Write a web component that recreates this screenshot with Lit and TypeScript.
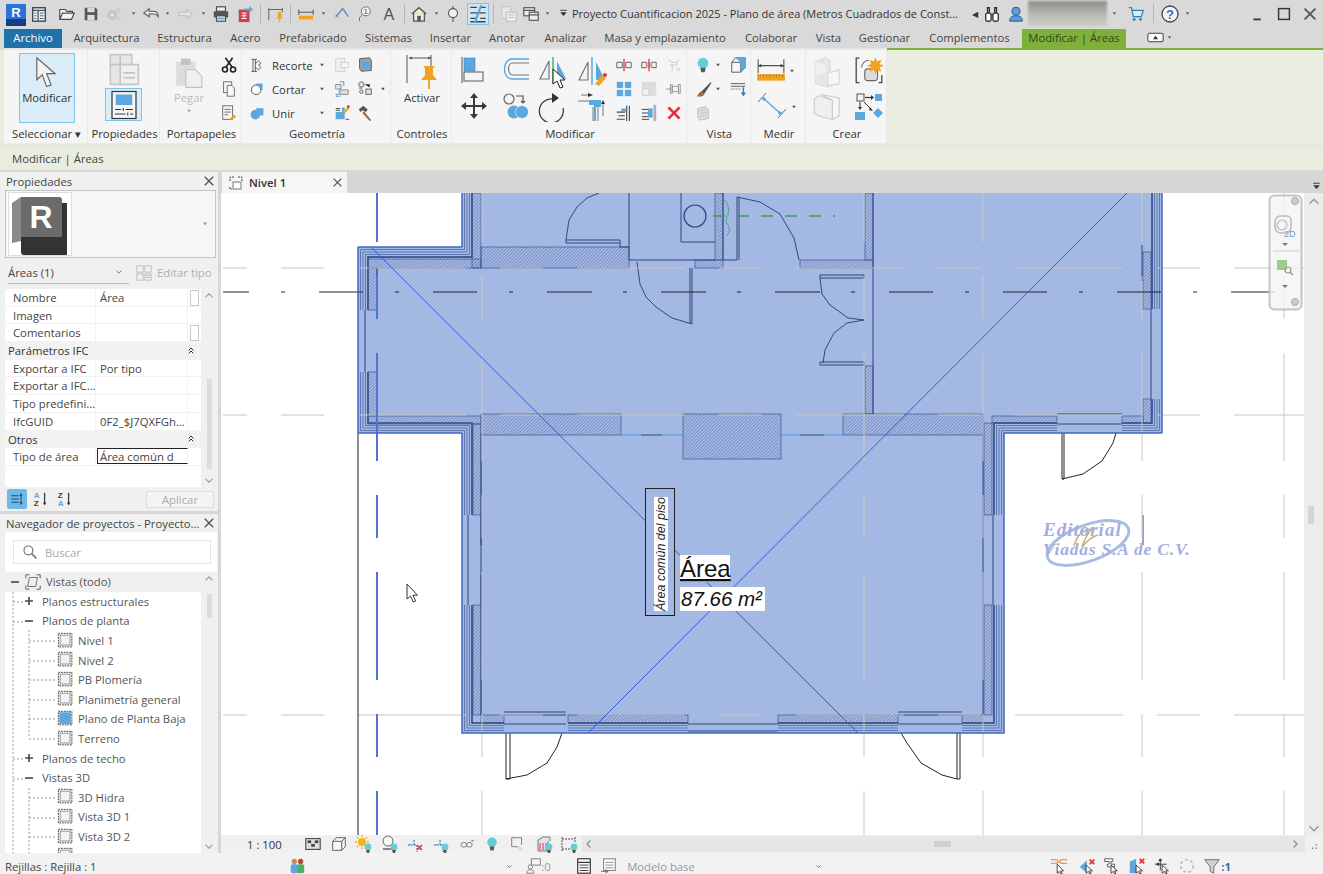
import { LitElement, css, html, svg, TemplateResult } from "lit";
import { customElement } from "lit/decorators.js";

const BLUE = "#5ba7de";
const OR = "#f0a41e";
const RED = "#e8303a";

// 20x20 icons
const I: Record<string, TemplateResult> = {
  docs: svg`<rect x="3" y="3" width="14" height="15" fill="#eef2f5" stroke="#3f4c59" stroke-width="1.6"/><path d="M3 6h14M9 6v12" stroke="#3f4c59" stroke-width="1.4"/><path d="M11 9h4M11 12h4M11 15h4M5 9h2M5 12h2M5 15h2" stroke="#3f4c59"/>`,
  open: svg`<path d="M2 16V5h6l2 2h6v2M2 16l3-7h13l-3 7z" fill="#f4f4f4" stroke="#4a4a4a" stroke-width="1.3"/>`,
  save: svg`<path d="M3 3h12l2 2v12H3z" fill="#565656"/><rect x="6" y="3" width="8" height="5" fill="#dcdcdc"/><rect x="6" y="11" width="8" height="6" fill="#dcdcdc"/>`,
  sync: svg`<circle cx="8" cy="11" r="5.5" fill="#c4c4c4"/><circle cx="8" cy="11" r="2" fill="#e6e6e6"/><circle cx="15" cy="6" r="2.6" fill="#cfcfcf"/><circle cx="15" cy="15" r="2.6" fill="#cfcfcf"/>`,
  undo: svg`<path d="M2 9l6-5v3h5q5 0 5 6 -2-3-5-3H8v3z" fill="#e8e8e8" stroke="#5a5a5a" stroke-width="1.2"/>`,
  redo: svg`<path d="M18 10l-6-5v3H3v4h9v3z" fill="#e4e4e4" stroke="#c0c0c0" stroke-width="1.2"/>`,
  print: svg`<rect x="5" y="2" width="10" height="5" fill="#eee" stroke="#4a4a4a" stroke-width="1.3"/><rect x="2" y="7" width="16" height="7" rx="1" fill="#555"/><rect x="5" y="12" width="10" height="6" fill="#f2f2f2" stroke="#4a4a4a" stroke-width="1.3"/><path d="M6 15h8" stroke="${BLUE}" stroke-width="2"/>`,
  sheet: svg`<rect x="3" y="5" width="12" height="14" fill="#c8414a"/><path d="M6 9h6M6 12h6M6 15h6M9 9v6" stroke="#fff"/><path d="M9 4h6V1l4 4-4 3V6H9z" fill="${BLUE}"/>`,
  pinbar: svg`<path d="M2 3v14M2 5h15M17 3v5" stroke="#666" stroke-width="1.1"/><path d="M11 8h6l-1 1v4l2 2H10l2-2V9z" fill="${OR}"/><path d="M14 15v4" stroke="${OR}" stroke-width="1.4"/>`,
  ruler: svg`<path d="M2 5v6M18 5v6M2 8h16" stroke="#555" stroke-width="1.1"/><rect x="2" y="12" width="16" height="4" fill="${OR}"/>`,
  aligned: svg`<path d="M3 13L11 4M11 4l6 9" stroke="#4f96d0" stroke-width="1.7" fill="none"/><path d="M9 3l4 3M3 11l3 3" stroke="#888"/>`,
  tagn: svg`<circle cx="12" cy="7" r="5" fill="#f2f2f2" stroke="#666"/><text x="12" y="10" font-size="8" text-anchor="middle" fill="#444" font-family="Liberation Sans">1</text><path d="M8 11l-3 3v4" stroke="#666" fill="none"/>`,
  atext: svg`<text x="10" y="17" font-size="18" text-anchor="middle" fill="#555" font-family="Liberation Sans">A</text>`,
  home: svg`<path d="M2 10l8-7 8 7M4 9v9h12V9" fill="#f3ebd9" stroke="#555" stroke-width="1.4"/><rect x="8" y="12" width="4" height="6" fill="#5a5a5a"/>`,
  secm: svg`<circle cx="10" cy="9" r="5" fill="#f0f0f0" stroke="#555" stroke-width="1.2"/><path d="M10 1v3M10 14v5" stroke="#555" stroke-width="1.2"/>`,
  thin: svg`<rect x=".5" y=".5" width="19" height="19" fill="#d3e7f3" stroke="#7fc4e8"/><path d="M3 4h6M12 4h5M3 9h14M3 14h6M12 14h5M3 17h14" stroke="#444" stroke-width="1.3"/><path d="M7 18L13 2" stroke="${BLUE}" stroke-width="2"/>`,
  gdoc: svg`<rect x="2" y="2" width="10" height="13" fill="#e6e6e6" stroke="#c0c0c0"/><rect x="7" y="8" width="11" height="10" fill="#eee" stroke="#bbb"/><path d="M9 11h7M9 14h7" stroke="#bbb"/>`,
  switchw: svg`<rect x="2" y="3" width="12" height="9" fill="#eee" stroke="#555" stroke-width="1.3"/><rect x="8" y="8" width="10" height="9" fill="#eee" stroke="#555" stroke-width="1.3"/><path d="M2 6h12M8 11h10" stroke="#555" stroke-width="1.3"/>`,
  custom: svg`<path d="M5 5h10" stroke="#333" stroke-width="1.4"/><path d="M5 8h10l-5 6z" fill="#333"/>`,
  binoc: svg`<rect x="3" y="9" width="6" height="9" rx="2" fill="#fff" stroke="#333" stroke-width="1.5"/><rect x="11" y="9" width="6" height="9" rx="2" fill="#fff" stroke="#333" stroke-width="1.5"/><path d="M5 9V3h2v6M13 9V3h2v6M9 11h2" stroke="#333" stroke-width="1.5" fill="none"/>`,
  user: svg`<circle cx="10" cy="7" r="4.5" fill="#5f9bd8" stroke="#24548f"/><path d="M3 18c0-5 3-6 7-6s7 1 7 6z" fill="#5f9bd8" stroke="#24548f"/>`,
  cart: svg`<path d="M2 3h3l2 10h9l2-7H6" fill="#d8ecf8" stroke="#2f7fb8" stroke-width="1.4"/><circle cx="8" cy="16" r="1.6" fill="#2f7fb8"/><circle cx="15" cy="16" r="1.6" fill="#2f7fb8"/>`,
  help: svg`<circle cx="10" cy="10" r="8" fill="#f4f4f4" stroke="#444" stroke-width="1.3"/><text x="10" y="15" font-size="13" font-weight="700" text-anchor="middle" fill="#2c6fc0" font-family="Liberation Sans">?</text>`,
  min: svg`<path d="M5 16h8" stroke="#333" stroke-width="2"/>`,
  max: svg`<rect x="4" y="4" width="12" height="12" fill="none" stroke="#333" stroke-width="1.6"/>`,
  close: svg`<path d="M4 4l12 12M16 4L4 16" stroke="#555" stroke-width="2"/>`,
  panelbtn: svg`<rect x="1" y="5" width="18" height="10" rx="2" fill="#fafafa" stroke="#444" stroke-width="1.2"/><path d="M7 12l3-4 3 4z" fill="#333"/>`,
  // ribbon
  arrowbig: svg`<path d="M4 1l0 13 3.2-3 2.6 7 2.6-1-2.6-6.6h5z" fill="#f4f4f4" stroke="#666" stroke-width=".7"/>`,
  props: svg`<rect x="2" y="1" width="13" height="18" fill="#e6e6e6" stroke="#c8c8c8"/><rect x="8" y="7" width="11" height="12" fill="#efefef" stroke="#c4c4c4"/><path d="M2 7h6M8 1v6M10 12h7M10 15h7" stroke="#c4c4c4"/>`,
  propsel: svg`<rect x="2" y="1" width="16" height="18" fill="#f6f6f6" stroke="#333" stroke-width=".8"/><rect x="4.5" y="3" width="11" height="7" fill="${BLUE}"/><path d="M4 13h4M11 13h5M4 16h7M14 16h2M9.5 12v2M12.5 15v2" stroke="#333" stroke-width=".7"/>`,
  paste: svg`<rect x="2" y="3" width="12" height="15" fill="#dcdcdc"/><rect x="5" y="1" width="6" height="4" fill="#c4c4c4"/><path d="M8 8h6l4 4v7H8z" fill="#f0f0f0" stroke="#c0c0c0" stroke-width=".7"/>`,
  scissors: svg`<circle cx="5.5" cy="15" r="2.8" fill="none" stroke="#222" stroke-width="1.8"/><circle cx="14.5" cy="15" r="2.8" fill="none" stroke="#222" stroke-width="1.8"/><path d="M6.5 12.5L14 2M13.5 12.5L6 2" stroke="#222" stroke-width="1.8"/>`,
  copy: svg`<rect x="4" y="2" width="9" height="12" fill="#f8f8f8" stroke="#666"/><path d="M8 6h5l3 3v9H8z" fill="#f8f8f8" stroke="#666"/>`,
  fmt: svg`<rect x="3" y="2" width="11" height="15" fill="#f4f4f4" stroke="#666"/><path d="M5 6h7M5 9h7M5 12h4" stroke="#666"/><path d="M11 16l5-4 2 2-5 4z" fill="${OR}"/>`,
  cope: svg`<path d="M3 3h7M3 18h7M5 3v15M8 3v15M8 8l4-3M8 13l4 3M12 5l3 3-3 2 3 3-3 3" stroke="#444" fill="none" stroke-width="1"/>`,
  cut: svg`<circle cx="9" cy="11" r="6" fill="#fff" stroke="#555" stroke-width="1.2"/><path d="M9 5a6 6 0 0 1 6 6" stroke="${RED}" stroke-width="1.8" fill="none"/><path d="M9 3h8v8h-3a5 5 0 0 0-5-5z" fill="${BLUE}"/>`,
  join: svg`<circle cx="8" cy="12" r="6" fill="${BLUE}"/><rect x="9" y="4" width="9" height="9" fill="${BLUE}"/>`,
  wallg: svg`<rect x="3" y="3" width="10" height="14" fill="#f0f0f0" stroke="#ccc"/><rect x="9" y="7" width="8" height="6" fill="#f6f6f6" stroke="#ccc"/>`,
  cube: svg`<path d="M4 3l11-1 2 3v11l-11 1-2-3z" fill="#9aa5ae" stroke="#555"/><rect x="6" y="6" width="9" height="8" fill="${BLUE}"/>`,
  split: svg`<path d="M3 5h6v5H3zM9 2h3v5" fill="#e6e6e6" stroke="#888"/><path d="M7 11h10v5H7z" fill="#ddd" stroke="#888"/><path d="M3 16h3M3 18h3" stroke="${BLUE}" stroke-width="1.5"/><path d="M8 1v18" stroke="${BLUE}" stroke-dasharray="2 2"/>`,
  grp: svg`<circle cx="6" cy="5" r="3" fill="#ddd" stroke="#666"/><circle cx="6" cy="13" r="2" fill="#ddd" stroke="#666"/><rect x="11" y="10" width="6" height="6" fill="#ddd" stroke="#666"/><path d="M10 5h5v3M3 9h4" stroke="#666"/>`,
  wallb: svg`<path d="M3 17V9h7V4h3v13z" fill="${BLUE}"/><path d="M3 7h5M3 5h5M14 17h4" stroke="#444"/><path d="M11 10l5-7 2 2-5 6z" fill="${OR}"/><circle cx="17" cy="3" r="1.6" fill="${RED}"/>`,
  hammer: svg`<path d="M3 6l5-4 5 4-2 3-4-2-2 2z" fill="#555"/><path d="M9 8l8 10-2 1-8-9z" fill="#a06a48"/>`,
  activate: svg`<path d="M3 1v28M5 4h22M27 1v12" stroke="#555" stroke-width="1"/><path d="M5 4l3-1.6v3.2zM27 4l-3-1.6v3.2z" fill="#555"/><path d="M20 12h12l-2 2v7l4 5H18l4-5v-7z" fill="${OR}" transform="translate(-1 0)"/><path d="M25 26v9" stroke="${OR}" stroke-width="2"/>`,
  align: svg`<path d="M2 1v26" stroke="#888" stroke-width="1.5"/><rect x="4" y="2" width="11" height="13" fill="${BLUE}" stroke="#3f84bd" stroke-width=".6"/><rect x="4" y="16" width="19" height="9" fill="#f5f5f5" stroke="#666" stroke-width="1.1"/>`,
  offset: svg`<path d="M28 3H11C1 3 1 23 11 23h17" fill="none" stroke="${BLUE}" stroke-width="1.4"/><path d="M28 7H12C6 7 6 19 12 19h16" fill="none" stroke="#777" stroke-width="1.2"/>`,
  mirrorp: svg`<path d="M11 5L2 23h9z" fill="#f4f4f4" stroke="#777" stroke-width="1.2"/><path d="M19 5l9 18h-9z" fill="${BLUE}"/><path d="M15 1v27" stroke="#3fc46a" stroke-width="1.6"/>`,
  mirrord: svg`<path d="M11 6L2 24h9z" fill="#f4f4f4" stroke="#777" stroke-width="1.2"/><path d="M19 6l9 18h-9z" fill="${BLUE}"/><path d="M15 1v28" stroke="${BLUE}" stroke-width="1.5"/><path d="M18 28l7-9 4 3-7 8z" fill="${OR}"/><circle cx="28" cy="19" r="2" fill="${RED}"/>`,
  move: svg`<path d="M14 1l4 5h-3v7h7v-3l5 4-5 4v-3h-7v7h3l-4 5-4-5h3v-7H6v3l-5-4 5-4v3h7V6h-3z" fill="#3a3a3a"/>`,
  copym: svg`<circle cx="8" cy="7" r="5" fill="#f5f5f5" stroke="#666" stroke-width="1.2"/><path d="M15 4h7v6m-2-1l2 2 2-2" stroke="#555" fill="none" stroke-width="1.2"/><circle cx="13" cy="20" r="6.5" fill="${BLUE}"/><circle cx="21" cy="20" r="6.5" fill="${BLUE}" stroke="#fff" stroke-width=".6"/>`,
  rotate: svg`<path d="M16 5A12 12 0 1 0 26 14" fill="none" stroke="#3f3f3f" stroke-width="1.3" transform="translate(-1 2)"/><path d="M14 1l7 5-7 5z" fill="#333"/>`,
  trim: svg`<path d="M1 9h12M4 3h10" stroke="#777" stroke-width="1.2"/><path d="M11 1l5 2-5 2z" fill="#333"/><path d="M12 8h12v7h-5v14h-2V13h-5z" fill="${BLUE}"/><path d="M16 15v14M21 15v14M26 12v12" stroke="#777"/><path d="M26 8l-2 4h4z" fill="#333"/>`,
  alignh: svg`<path d="M2 7h6v6H2zM12 7h6v6h-6z" fill="#f5f5f5" stroke="#555"/><path d="M10 3v14" stroke="${RED}" stroke-width="1.4"/>`,
  alignr: svg`<path d="M2 7h5v6H2z" fill="#f5f5f5" stroke="#555"/><path d="M13 7h5v6h-5z" fill="#f5f5f5" stroke="#555"/><rect x="7" y="7" width="6" height="6" fill="#d8b3b3"/><path d="M10 3v14" stroke="${RED}" stroke-width="1.4"/>`,
  pinx: svg`<path d="M4 4l3 3h6l3-3M5 10h8v-3M8 10v7" stroke="#c4c4c4" fill="none"/><path d="M13 13l4 4M17 13l-4 4" stroke="#c4c4c4"/>`,
  pin: svg`<path d="M1 10h5M6 5h2v10H6zM8 7h7v6H8zM15 5h2v10h-2z" stroke="#888" fill="#f4f4f4" stroke-width=".9"/>`,
  grid4: svg`<rect x="2" y="2" width="7" height="7" fill="${BLUE}"/><rect x="11" y="2" width="7" height="7" fill="${BLUE}"/><rect x="2" y="11" width="7" height="7" fill="${BLUE}"/><rect x="11" y="11" width="7" height="7" fill="${BLUE}"/>`,
  gridg: svg`<rect x="2" y="2" width="16" height="16" fill="#dcdcdc"/><rect x="3" y="10" width="7" height="7" fill="#f4f4f4" stroke="#ccc"/>`,
  xred: svg`<path d="M3 3l14 14M17 3L3 17" stroke="${RED}" stroke-width="3.4"/>`,
  tr1: svg`<path d="M2 9h9M4 13h7M2 17h9M13 2v17" stroke="#444" stroke-width="1.2"/><rect x="7" y="5" width="5" height="4" fill="${BLUE}"/><path d="M16 2v17" stroke="#444" stroke-width="1.2"/>`,
  tr2: svg`<path d="M2 6h8M2 10h8M2 14h8M2 17h8" stroke="#444" stroke-width="1.1"/><rect x="9" y="5" width="5" height="10" fill="${BLUE}"/><rect x="15" y="1" width="3" height="18" fill="#b0b0b0"/>`,
  bulb: svg`<circle cx="10" cy="8" r="6" fill="#62cfd8"/><path d="M7 13h6l-1 5H8z" fill="#5a5a5a"/>`,
  box3: svg`<path d="M3 7h10v11H3zM3 7l4-5h11l-5 5M13 18l5-5V2" fill="#f6f6f6" stroke="#555"/><path d="M7 2h11v11l-5 5V7z" fill="${BLUE}"/>`,
  brush: svg`<path d="M19 2L8 13l3 3L19 4z" fill="#555"/><path d="M8 13c-3 0-2 3-5 5 4 1 8 0 8-2z" fill="#a06a38"/>`,
  lines: svg`<path d="M2 4h16M2 7h16" stroke="#555"/><path d="M2 10h11" stroke="#777" stroke-dasharray="2 1"/><path d="M16 8v9" stroke="#2b7fd0" stroke-width="1.6"/><path d="M13 14l3 4 3-4z" fill="#2b7fd0"/>`,
  wallh: svg`<path d="M4 5l9-2 3 3v10l-9 2-3-3z" fill="#ddd" stroke="#bbb"/><path d="M6 8l8-2M6 11l8-2M6 14l8-2" stroke="#c4c4c4"/>`,
  meas: svg`<path d="M2 3v13M26 3v13M2 9h24" stroke="#555"/><path d="M2 9l3-1.5v3zM26 9l-3-1.5v3z" fill="#333"/><rect x="1" y="17" width="26" height="6" fill="${OR}"/><path d="M4 17v2M7 17v3M10 17v2M13 17v3M16 17v2M19 17v3M22 17v2M25 17v3" stroke="#9c6a0c" stroke-width=".7"/>`,
  angle: svg`<path d="M2 11L10 2M22 27L30 18" stroke="#666"/><path d="M7 7l18 16" stroke="${BLUE}" stroke-width="1.3"/><circle cx="8" cy="8" r="1.8" fill="${BLUE}"/><circle cx="24" cy="22" r="1.8" fill="${BLUE}"/>`,
  solidg: svg`<path d="M3 7l9-4 4 3v10l8-2v12l-10 3-11-3z" fill="#e6e6e6" stroke="#ddd"/><path d="M3 7l9 3v6l-9 3z" fill="#f0f0f0"/><path d="M14 17l10-3v12l-10 2z" fill="#f6f6f6" stroke="#d8d8d8"/>`,
  cornerg: svg`<path d="M2 8l4-3 12 4v17l-12-3-4-3z" fill="#efefef" stroke="#ccc"/><path d="M8 4l16 3v16l-6 3V9z" fill="#f6f6f6" stroke="#ccc"/>`,
  inplace: svg`<path d="M6 3H3v23h3M24 26h3v-7" stroke="#444" stroke-width="1.2" fill="none"/><path d="M8 12a7 7 0 0 1 7-7" stroke="#777" fill="none"/><rect x="11" y="13" width="12" height="11" rx="3" fill="#dcdcdc" stroke="#666"/><path d="M21 2l1.6 4 4-1.6-1.6 4 4 1.6-4 1.6 1.6 4-4-1.6-1.6 4-1.6-4-4 1.6 1.6-4-4-1.6 4-1.6-1.6-4 4 1.6z" fill="${OR}"/>`,
  flow: svg`<rect x="3" y="2" width="7" height="7" fill="#f4f4f4" stroke="#555"/><path d="M11 5.5h7" stroke="#333" stroke-width="1.2"/><path d="M17 3l3 2.5-3 2.5z" fill="#333"/><rect x="21" y="2" width="7" height="7" fill="${BLUE}"/><path d="M6 10v7M10 10l8 8" stroke="#333"/><path d="M4 15l2 3 2-3zM16 15l3 4-4-1z" fill="#333"/><rect x="1" y="20" width="10" height="8" fill="${BLUE}"/><path d="M24 16l5 5-5 5-5-5z" fill="${BLUE}"/>`,
  // panel
  editg: svg`<rect x="2" y="2" width="7" height="7" fill="none" stroke="#bbb"/><rect x="11" y="2" width="7" height="7" fill="none" stroke="#bbb"/><rect x="2" y="11" width="7" height="7" fill="none" stroke="#bbb"/><path d="M11 11h7v7h-7zM12 13h5M12 15h5" fill="none" stroke="#bbb"/>`,
  cat: svg`<path d="M3 6h9M3 10h9M3 14h9" stroke="#1e4a6c" stroke-width="1.4"/><path d="M15 3v14" stroke="#1e4a6c" stroke-width="1.3"/><path d="M13 6l2-3 2 3zM13 14l2 3 2-3z" fill="#1e4a6c"/>`,
  az: svg`<text x="2" y="9" font-size="9" font-weight="700" fill="${BLUE}" font-family="Liberation Sans">A</text><text x="2" y="18" font-size="9" font-weight="700" fill="#444" font-family="Liberation Sans">Z</text><path d="M14 3v13" stroke="#333" stroke-width="1.3"/><path d="M12 14l2 3 2-3z" fill="#333"/>`,
  za: svg`<text x="2" y="9" font-size="9" font-weight="700" fill="#444" font-family="Liberation Sans">Z</text><text x="2" y="18" font-size="9" font-weight="700" fill="${BLUE}" font-family="Liberation Sans">A</text><path d="M14 3v13" stroke="#333" stroke-width="1.3"/><path d="M12 14l2 3 2-3z" fill="#333"/>`,
  search: svg`<circle cx="8" cy="8" r="5.5" fill="none" stroke="#777" stroke-width="1.5"/><path d="M12 12l6 6" stroke="#777" stroke-width="2"/>`,
  vistas: svg`<path d="M2 6V2h4M14 2h4v4M2 14v4h4M18 14v4h-4" stroke="#555" fill="none"/><path d="M6 5h9l-2 10H4z" fill="#f0f0f0" stroke="#666"/>`,
  view: svg`<rect x="1.5" y="1.5" width="15" height="15" fill="none" stroke="#333" stroke-dasharray="2 1"/><rect x="3.5" y="3.5" width="11" height="11" fill="#f2f2f2" stroke="#888"/>`,
  viewa: svg`<rect x="1.5" y="1.5" width="15" height="15" fill="none" stroke="#333" stroke-dasharray="2 1"/><rect x="2.5" y="2.5" width="13" height="13" fill="${BLUE}"/>`,
  tabv: svg`<path d="M2 6V2h4M10 2h4v4M2 12v2h2" stroke="#444" fill="none" stroke-dasharray="2 1"/><rect x="5" y="7" width="8" height="7" fill="#fff" stroke="#777"/>`,
  // view bar
  detail: svg`<rect x="2" y="4" width="16" height="12" fill="#ddd" stroke="#444" stroke-width="1.2"/><rect x="4" y="6" width="4" height="3" fill="#444"/><rect x="12" y="6" width="4" height="3" fill="#444"/><rect x="8" y="10" width="4" height="3" fill="#444"/>`,
  style: svg`<path d="M3 7h10v10H3zM3 7l4-4h10l-4 4M13 17l4-4V3" fill="#f8f8f8" stroke="#555"/>`,
  sun: svg`<circle cx="8" cy="8" r="4" fill="#f6b21a"/><path d="M8 1v2M8 13v2M1 8h2M13 8h2M3 3l1.5 1.5M11.5 11.5L13 13M13 3l-1.5 1.5M3 13l1.5-1.5" stroke="#f6b21a" stroke-width="1.4"/>`,
  shad: svg`<circle cx="8" cy="7" r="5" fill="#fafafa" stroke="#666"/><path d="M3 15h10" stroke="#888" stroke-width="2"/>`,
  crop: svg`<path d="M3 11h9v7M9 6v6M5 11v-1" stroke="#2b6fb0" stroke-dasharray="2 1" fill="none"/>`,
  hide: svg`<ellipse cx="6" cy="11" rx="3.5" ry="3" fill="none" stroke="#666"/><ellipse cx="13" cy="11" rx="3.5" ry="3" fill="none" stroke="#666"/><path d="M17 5v2M15 6h4" stroke="#888"/>`,
  dot: svg`<circle cx="5" cy="5" r="3.4" fill="#62cfd8"/><path d="M3 8h4l-1 3H4z" fill="#555"/>`,
  reveal: svg`<path d="M3 3h11v8M3 3v10h7" stroke="#777" fill="none"/><path d="M12 13v3h3" stroke="#888" stroke-dasharray="1 1" fill="none"/>`,
  analy: svg`<path d="M4 6l5-3h7v4M4 6v11h10V7" stroke="#777" fill="#e4e4e4"/><path d="M6 9v7M9 9v7M12 9v7" stroke="${RED}"/>`,
  tempd: svg`<path d="M3 3v14M3 5h13M16 3v6M3 15h9" stroke="#555" stroke-dasharray="2 1"/>`,
  work: svg`<circle cx="7" cy="5" r="3" fill="#d08a52"/><rect x="3" y="8" width="8" height="10" rx="2" fill="${BLUE}"/><circle cx="14" cy="5" r="3" fill="#b04a3a"/><rect x="10" y="8" width="8" height="10" rx="2" fill="#4fae64"/>`,
  worksets: svg`<rect x="7" y="2" width="10" height="7" fill="#f6f6f6" stroke="#777"/><circle cx="6" cy="11" r="2.4" fill="#f6f6f6" stroke="#777"/><path d="M2 18c0-3 2-4 4-4s4 1 4 4z" fill="#f6f6f6" stroke="#777"/>`,
  list: svg`<rect x="3" y="2" width="14" height="16" fill="#fff" stroke="#333" stroke-width="1.3"/><path d="M3 6h14" stroke="#333" stroke-width="1.4"/><path d="M5 9h10M5 12h10M5 15h10" stroke="#333"/>`,
  listg: svg`<rect x="4" y="2" width="13" height="13" fill="#fff" stroke="#888" stroke-width="1.2"/><path d="M6 6h9M6 9h9M6 12h9" stroke="#888"/><path d="M1 16h8M6 14l3 2-3 2" stroke="#666" fill="none"/>`,
  sellink: svg`<path d="M1 7h7M12 7h7M1 3h6a2 2 0 0 1 0 4M19 3h-6a2 2 0 0 0 0 4" stroke="#e57c30" fill="none" stroke-width="1.2"/><path d="M8 8v10l2.5-2 1.5 3.5 1.5-.7-1.5-3.4h3z" fill="#fff" stroke="#222" stroke-width=".9"/>`,
  selun: svg`<path d="M2 11l8-7v14z" fill="${BLUE}"/><path d="M13 3l5 5M18 3l-5 5" stroke="${RED}" stroke-width="2"/><path d="M9 9v9l2.5-2 1.5 3 1.5-.7-1.5-3h3z" fill="#fff" stroke="#222" stroke-width=".9"/>`,
  selpin: svg`<path d="M3 2h9v3h-2v3h4v3H6V8h2V5H3z" fill="#fff" stroke="#555"/><path d="M10 9v9l2.5-2 1.5 3 1.5-.7-1.5-3h3z" fill="#fff" stroke="#222" stroke-width=".9"/>`,
  selface: svg`<path d="M2 5l7-3v16H2z" fill="${BLUE}"/><path d="M13 2l5 5M18 2l-5 5" stroke="${RED}" stroke-width="2"/><path d="M9 9v9l2.5-2 1.5 3 1.5-.7-1.5-3h3z" fill="#fff" stroke="#222" stroke-width=".9"/>`,
  seldrag: svg`<path d="M1 8h13M7 2v13M3 8l2-1.5v3zM7 2l-1.5 2h3z" stroke="#333" fill="#333"/><path d="M9 9v9l2.5-2 1.5 3 1.5-.7-1.5-3h3z" fill="#fff" stroke="#222" stroke-width=".9"/>`,
  ring: svg`<circle cx="10" cy="10" r="7" fill="none" stroke="#bbb" stroke-width="2" stroke-dasharray="3 3"/>`,
  funnel: svg`<path d="M2 3h16l-6 8v7l-4-2v-5z" fill="#d0d0d0" stroke="#666"/>`,
  dd: svg`<path d="M7 8h6l-3 4z" fill="#444"/>`,
  ddg: svg`<path d="M7 8h6l-3 4z" fill="#999"/>`,
  chev: svg`<path d="M6 8l4 4 4-4" fill="none" stroke="#666" stroke-width="1.6"/>`,
  dup: svg`<path d="M6 9l4-4 4 4M6 14l4-4 4 4" fill="none" stroke="#222" stroke-width="1.6"/>`,
  lt: svg`<path d="M12 5l-5 5 5 5" fill="none" stroke="#888" stroke-width="1.6"/>`,
  rt: svg`<path d="M8 5l5 5-5 5" fill="none" stroke="#888" stroke-width="1.6"/>`,
  up: svg`<path d="M5 12l5-5 5 5" fill="none" stroke="#999" stroke-width="1.6"/>`,
  down: svg`<path d="M5 8l5 5 5-5" fill="none" stroke="#999" stroke-width="1.6"/>`,
  grip: svg`<path d="M15 15h2v2h-2zM10 15h2v2h-2zM15 10h2v2h-2z" fill="#888"/>`,
};

const ic = (name: string, size = 18, box = 20) =>
  html`<svg class="ic" width=${size} height=${size} viewBox="0 0 ${box} ${box}">${I[name]}</svg>`;

type StripItem = [TemplateResult | string, number];

// row of zero-width slots, so that each item is centred on its page x value
const strip = (items: StripItem[], from: number, to: number) => {
  let prev = from;
  const slots = items.map(([item, c]) => {
    const gap = c - prev;
    prev = c;
    return html`<span class="slot" style="margin-left:${gap}px">${typeof item === "string" ? ic(item) : item}</span>`;
  });
  return html`${slots}<span class="slot" style="margin-left:${to - prev}px"></span>`;
};

const sep = html`<i class="tsep"></i>`;
const dd = ic("dd", 12);

@customElement("ribbon-bar")
class RibbonBar extends LitElement {
  static styles = css`
    :host { display: flex; flex: none; height: 95px; position: relative; }
    .panels { display: flex; height: 95px; margin-left: 4px; box-sizing: border-box; border-top: 2px solid #e7e7e7; background: #f5f5f5; }
    .p { display: flex; flex-direction: column; border-right: 1px solid #e8e8e8; box-sizing: border-box; }
    .b { height: 75px; flex: none; padding-top: 3px; box-sizing: border-box; }
    .l { height: 18px; line-height: 17px; padding-left: 2px; box-sizing: border-box; text-align: center; font-size: 11.3px; color: #333; white-space: nowrap; }
    .ic { display: block; flex: none; }
    .cell { display: flex; align-items: center; justify-content: center; color: #333; min-width: 0; }
    .w1 { width: 84px; } .w2 { width: 72px; } .w3 { width: 82px; } .w4 { width: 149px; }
    .w5 { width: 61px; } .w6 { width: 235px; } .w7 { width: 64px; } .w8 { width: 55px; } .w9 { width: 81px; }
    .sel { display: flex; flex-direction: column; align-items: center; width: 56px; height: 70px; margin-left: 15px; box-sizing: border-box; background: #d9ecf7; border: 1px solid #7fc4e8; font-size: 11.3px; color: #333; padding-top: 2px; }
    .stack { display: flex; flex-direction: column; align-items: center; gap: 2px; }
    .on { width: 37px; height: 33px; background: #d9ecf7; border: 1px solid #7fc4e8; box-sizing: border-box; display: flex; align-items: center; justify-content: center; }
    .g3 { display: grid; grid-template-columns: 58px 22px; grid-template-rows: repeat(3, 24px); }
    .paste { grid-row: 1 / 4; flex-direction: column; color: #bbb; font-size: 11.3px; justify-content: flex-start; padding-top: 4px; line-height: 14px; }
    .paste span { margin-top: 2px; }
    .g4 { display: grid; grid-template-columns: 89px 22px 24px 12px; grid-template-rows: repeat(3, 24px); }
    .tool { display: flex; align-items: center; padding-left: 7px; font-size: 11.3px; color: #333; }
    .tool b { font-weight: 400; margin-left: 7px; width: 44px; }
    .act { display: flex; flex-direction: column; align-items: center; font-size: 11.3px; color: #333; padding-top: 4px; padding-left: 2px; }
    .g6 { display: flex; }
    .bigs { display: grid; grid-template-columns: 45px 37px 38px 39px; grid-template-rows: 36px 36px; }
    .smalls { display: grid; grid-template-columns: 25px 25px 25px; grid-template-rows: repeat(3, 24px); }
    .g7 { display: grid; grid-template-columns: 38px 26px; grid-template-rows: repeat(3, 24px); }
    .g7 .cell:nth-child(odd) { justify-content: flex-start; padding-left: 7px; }
    .g8 { display: grid; grid-template-rows: 36px 36px; }
    .g8 .cell { justify-content: flex-start; padding-left: 5px; }
    .g9 { display: grid; grid-template-columns: 45px 36px; grid-template-rows: 36px 36px; }
    .ptr { position: absolute; left: 552px; top: 20px; }
  `;

  render() {
    const cell = (n: string, s = 18, b = 20) => html`<div class="cell">${ic(n, s, b)}</div>`;
    const tool = (n: string, t: string) => html`<div class="tool">${ic(n, 16)}<b>${t}</b>${dd}</div>`;
    return html`<div class="panels">
      <div class="p w1">
        <div class="b"><div class="sel">${ic("arrowbig", 34)}<span>Modificar</span></div></div>
        <div class="l">Seleccionar ▾</div>
      </div>
      <div class="p w2">
        <div class="b stack">${ic("props", 33)}<div class="on">${ic("propsel", 30)}</div></div>
        <div class="l">Propiedades</div>
      </div>
      <div class="p w3">
        <div class="b g3">
          <div class="cell paste">${ic("paste", 32)}<span>Pegar</span>${ic("ddg", 12)}</div>
          ${cell("scissors")}
          ${cell("copy")}
          ${cell("fmt")}
        </div>
        <div class="l">Portapapeles</div>
      </div>
      <div class="p w4">
        <div class="b g4">
          ${tool("cope", "Recorte")}${cell("wallg")}${cell("cube")}<div></div>
          ${tool("cut", "Cortar")}${cell("split")}${cell("grp")}<div class="cell">${dd}</div>
          ${tool("join", "Unir")}${cell("wallb")}${cell("hammer")}<div></div>
        </div>
        <div class="l">Geometría</div>
      </div>
      <div class="p w5">
        <div class="b act">${ic("activate", 36, 36)}<span>Activar</span></div>
        <div class="l">Controles</div>
      </div>
      <div class="p w6">
        <div class="b g6">
          <div class="bigs">
            ${cell("align", 30, 30)}${cell("offset", 30, 30)}${cell("mirrorp", 30, 30)}${cell("mirrord", 30, 30)}
            ${cell("move", 30, 30)}${cell("copym", 30, 30)}${cell("rotate", 30, 30)}${cell("trim", 30, 30)}
          </div>
          <div class="smalls">
            ${cell("alignh")}${cell("alignr")}${cell("pinx")}
            ${cell("grid4")}${cell("gridg")}${cell("pin")}
            ${cell("tr1")}${cell("tr2")}${cell("xred", 16)}
          </div>
        </div>
        <div class="l">Modificar</div>
      </div>
      <div class="p w7">
        <div class="b g7">
          <div class="cell">${ic("bulb")}${dd}</div>${cell("box3")}
          <div class="cell">${ic("brush")}${dd}</div>${cell("lines")}
          <div class="cell">${ic("wallh")}</div><div></div>
        </div>
        <div class="l">Vista</div>
      </div>
      <div class="p w8">
        <div class="b g8">
          <div class="cell">${ic("meas", 30, 28)}${dd}</div>
          <div class="cell">${ic("angle", 32, 32)}${dd}</div>
        </div>
        <div class="l">Medir</div>
      </div>
      <div class="p w9">
        <div class="b g9">
          ${cell("solidg", 34, 30)}${cell("inplace", 32, 30)}
          ${cell("cornerg", 34, 30)}${cell("flow", 30, 30)}
        </div>
        <div class="l">Crear</div>
      </div>
    </div>
    <svg class="ptr" width="16" height="22" viewBox="0 0 16 22"><path d="M1 1v15l4-3 3 7 3-1-3-7h5z" fill="#fff" stroke="#222"/></svg>`;
  }
}

@customElement("side-panel")
class SidePanel extends LitElement {
  static styles = css`
    :host { display: flex; flex-direction: column; width: 218px; flex: none; background: #f0f0f0; color: #444; font-size: 11.3px; }
    .ic { display: block; flex: none; }
    .hd { display: flex; align-items: center; justify-content: space-between; height: 18px; padding: 0 2px 0 6px; flex: none; white-space: nowrap; }
    .type { height: 66px; margin: 0 2px 0 5px; border: 1px solid #c4c4c4; background: #f6f6f6; display: flex; align-items: center; justify-content: space-between; padding-right: 3px; flex: none; }
    .logo { width: 64px; height: 64px; margin-left: 2px; background: #fff; border: 1px solid #ddd; box-sizing: border-box; }
    .inst { display: flex; align-items: center; height: 29px; padding-left: 8px; flex: none; }
    .cur { display: flex; align-items: center; justify-content: space-between; width: 121px; height: 23px; border-bottom: 1px solid #bbb; padding-right: 4px; box-sizing: border-box; margin-right: 6px; color: #444; }
    .editg { display: flex; align-items: center; gap: 4px; color: #b0b0b0; }
    .tbl { display: flex; height: 198px; margin: 2px 0 0 5px; flex: none; }
    .rows { width: 196px; background: #fff; }
    .row { display: grid; grid-template-columns: 91px 92px 12px; height: 17.7px; line-height: 17px; box-sizing: border-box; border-bottom: 1px solid #f2f2f2; white-space: nowrap; overflow: hidden; }
    .row > span:first-child { padding-left: 8px; border-right: 1px solid #f2f2f2; }
    .row > span:nth-child(2) { padding-left: 4px; border-right: 1px solid #f2f2f2; }
    .group { display: flex; justify-content: space-between; align-items: center; background: #f2f2f2; padding: 0 4px 0 3px; height: 17.7px; color: #333; box-sizing: border-box; }
    .chk { display: block; width: 7px; height: 14px; margin: 1px 0 0 2px; border: 1px solid #c8c8c8; background: #fff; }
    .edit { border: 1px solid #222; margin: 0 0 0 1px; height: 16px; line-height: 15px; padding-left: 2px !important; box-sizing: border-box; overflow: hidden; }
    .sb { width: 16px; display: flex; flex-direction: column; align-items: center; background: #f0f0f0; position: relative; }
    .thumb { position: absolute; width: 5px; background: #dcdcdc; left: 6px; }
    .t1 { top: 90px; height: 90px; }
    .t2 { top: 22px; height: 24px; }
    .sb .ic:last-child { margin-top: auto; }
    .tools { display: flex; align-items: center; height: 24px; padding-left: 7px; flex: none; }
    .tb { width: 20px; height: 20px; display: flex; align-items: center; justify-content: center; margin-right: 4px; border-radius: 2px; }
    .tb.on { background: #6db9e8; }
    .apply { margin-left: auto; margin-right: 4px; width: 68px; height: 17px; line-height: 15px; text-align: center; border: 1px solid #ddd; border-radius: 2px; color: #aaa; background: #f4f4f4; box-sizing: border-box; }
    .gap { height: 3px; background: #d6d6d6; flex: none; }
    .searchw { background: #fff; margin-left: 5px; margin-right: 1px; height: 40px; padding: 8px 6px 0 8px; box-sizing: border-box; flex: none; }
    .search { display: flex; align-items: center; gap: 7px; height: 24px; border: 1px solid #e4e4e4; padding-left: 8px; color: #aaa; box-sizing: border-box; }
    .tree { display: flex; margin-left: 5px; height: 281px; flex: none; overflow: hidden; }
    .nodes { width: 196px; background: #fff; position: relative; }
    .node { display: flex; align-items: center; height: 19.6px; white-space: nowrap; color: #555; }
    .node.root { background: #f0f0f0; padding-left: 5px; gap: 4px; }
    .node.lv1 { padding-left: 19px; gap: 8px; }
    .node.lv2 { padding-left: 52px; gap: 3px; }
    .sign { width: 10px; height: 10px; }
    .conn { position: absolute; left: 0; top: 0; pointer-events: none; }
  `;

  render() {
    const props = [
      ["Nombre", "Área", true],
      ["Imagen", "", false],
      ["Comentarios", "", true],
      { g: "Parámetros IFC" },
      ["Exportar a IFC", "Por tipo", false],
      ["Exportar a IFC...", "", false],
      ["Tipo predefini...", "", false],
      ["IfcGUID", "0F2_$J7QXFGh...", false],
      { g: "Otros" },
    ] as any[];
    const tree: [number, string, string?][] = [
      [1, "Planos estructurales", "+"],
      [1, "Planos de planta", "-"],
      [2, "Nivel 1"],
      [2, "Nivel 2"],
      [2, "PB Plomería"],
      [2, "Planimetría general"],
      [2, "Plano de Planta Baja", "a"],
      [2, "Terreno"],
      [1, "Planos de techo", "+"],
      [1, "Vistas 3D", "-"],
      [2, "3D Hidra"],
      [2, "Vista 3D 1"],
      [2, "Vista 3D 2"],
      [2, ""],
    ];
    return html`
      <div class="hd"><span>Propiedades</span>${ic("close", 14)}</div>
      <div class="type">
        <div class="logo">
          <svg width="62" height="62" viewBox="0 0 62 62" class="ic">
            <path d="M53 10h5v52H53z" fill="#333"/>
            <path d="M12 44h46v18H15q-3 0-3-3z" fill="#333"/>
            <path d="M3 10l9-6v44l-9 2z" fill="#8a8a8a"/>
            <path d="M12 4h38q3 0 3 3v37H12z" fill="#6b6b6b"/>
            <text x="32" y="35" font-size="32" font-weight="700" fill="#fff" text-anchor="middle" font-family="Liberation Sans">R</text>
          </svg>
        </div>
        ${ic("ddg", 14)}
      </div>
      <div class="inst">
        <div class="cur"><span>Áreas (1)</span>${ic("chev", 12)}</div>
        <div class="editg">${ic("editg", 18)}<span>Editar tipo</span></div>
      </div>
      <div class="tbl">
        <div class="rows">
          ${props.map((p) =>
            p.g
              ? html`<div class="group"><span>${p.g}</span>${ic("dup", 12)}</div>`
              : html`<div class="row"><span>${p[0]}</span><span>${p[1]}</span><span>${p[2] ? html`<i class="chk"></i>` : ""}</span></div>`
          )}
          <div class="row"><span>Tipo de área</span><span class="edit">Área común d</span><span></span></div>
        </div>
        <div class="sb">${ic("up", 14)}<i class="thumb t1"></i>${ic("down", 14)}</div>
      </div>
      <div class="tools">
        <div class="tb on">${ic("cat", 16)}</div>
        <div class="tb">${ic("az", 18)}</div>
        <div class="tb">${ic("za", 18)}</div>
        <div class="apply">Aplicar</div>
      </div>
      <div class="gap"></div>
      <div class="hd"><span>Navegador de proyectos - Proyecto...</span>${ic("close", 14)}</div>
      <div class="searchw"><div class="search">${ic("search", 16)}<span>Buscar</span></div></div>
      <div class="tree">
        <div class="nodes">
          <div class="node root"><svg class="sign" viewBox="0 0 10 10"><path d="M1 5h8" stroke="#444" stroke-width="1.6"/></svg>${ic("vistas", 18)}<span>Vistas (todo)</span></div>
          ${tree.map(([lv, t, m]) =>
            lv === 1
              ? html`<div class="node lv1"><svg class="sign" viewBox="0 0 10 10"><path d=${m === "+" ? "M1 5h8M5 1v8" : "M1 5h8"} stroke="#444" stroke-width="1.6"/></svg><span>${t}</span></div>`
              : html`<div class="node lv2">${ic(m === "a" ? "viewa" : "view", 18)}<span>${t}</span></div>`
          )}
          <svg class="conn" width="60" height="282" viewBox="0 0 60 282" fill="none" stroke="#999" stroke-dasharray="2 2">
            <path d="M8 20v262M8 30h10M8 50h10M8 187h10M8 207h10"/>
            <path d="M24 58v108M24 69h26M24 89h26M24 108h26M24 128h26M24 147h26M24 167h26"/>
            <path d="M24 216v66M24 226h26M24 246h26M24 265h26"/>
          </svg>
        </div>
        <div class="sb">${ic("up", 14)}<i class="thumb t2"></i>${ic("down", 14)}</div>
      </div>
    `;
  }
}

// hatched wall pieces: x y w h
const HATCH = [
  [472, 193, 9, 75], [368, 259, 113, 9], [368, 268, 9, 42], [368, 372, 9, 44], [368, 416, 113, 8],
  [473, 424, 8, 91], [473, 605, 8, 110], [481, 247, 148, 21], [715, 193, 8, 67], [695, 260, 28, 8],
  [800, 260, 73, 8], [865, 193, 8, 67], [865, 366, 8, 48], [481, 414, 140, 21], [683, 414, 98, 45],
  [843, 414, 140, 21], [984, 423, 8, 92], [984, 605, 8, 110], [992, 416, 65, 7], [1122, 416, 21, 7],
  [1143, 399, 8, 24], [1143, 252, 8, 57], [481, 715, 23, 8], [568, 715, 120, 8], [778, 715, 120, 8], [962, 715, 21, 8],
];
// pieces of the outline that doors and windows cut away
const OPENINGS = [
  [359.5, 310, 17, 62], [463.5, 515, 17, 90], [985, 515, 17.5, 90], [1143, 309, 17.5, 90],
  [504, 714, 64, 18], [688, 714, 90, 18], [898, 714, 64, 18], [1057, 413, 65, 18],
];
const DARKL = [
  "M365 310v62M377 268v42M377 372v44", "M468 515v90M481 515v30M481 575v30", "M993 515v90M1143 545v-30",
  "M1151 309v90M1142 245v36",
  "M504 715h62M504 724h62M504 712h62M898 715h64M898 724h64M898 712h64M688 724h90M688 731h90",
  "M1057 414h65M1057 424h65",
  "M629 193v67h86M681 193v49h34M723 193v67h14M737 197v63M739 197v63",
  "M873 193v221M692 268v56M690 268v56",
  "M566 240h54v3h-54zM620 243v4h9",
  "M820 275h44v3h-44zM820 362h44v3h-44z",
  "M481 434v281M983 435v280",
];
const ARCS = [
  "M566 240l3-20 8-13 10-9 12-5",
  "M737 197l23 5 20 12 14 24 5 22",
  "M637 262l3 22 6 13 10 10 16 11 20 6",
  "M820 278l2 16 8 11 18 13 16 2-17 3-13 10-9 17-2 13",
];
const OUT = ["M506 733v46h4v-46M506 779l21-4 20-12 10-16 5-14", "M957 733v46h3v-46M957 779l-15-4-21-12-14-20-6-10", "M1062 433v46h2v-46M1062 479l21-5 19-13 11-18 3-10"];
const VGRID = [482, 864, 983, 1142, 1284];
const HGRID = [268, 415, 715];

const outline = (d: number) =>
  `M${462 + d} 193V${247 + d}H${358 + d}V${433 - d}H${462 + d}V${733 - d}H${1004 - d}V${433 - d}H${1162 - d}V193`;

@customElement("plan-canvas")
class PlanCanvas extends LitElement {
  static styles = css`
    :host { display: block; width: 1083px; height: 642px; background: #fff; overflow: hidden; flex: none; }
    svg { display: block; }
  `;

  render() {
    return html`<svg width="1083" height="642" viewBox="221 193 1083 642">
      <defs>
        <pattern id="h" width="3.4" height="3.4" patternUnits="userSpaceOnUse">
          <path d="M-1 1L1-1M0 3.4L3.4 0M2.4 4.4L4.4 2.4" stroke="#5d70a8" stroke-width=".7"/>
        </pattern>
      </defs>
      <path d="M462 193V247H358V433H462V733H1004V433H1162V193z" fill="#a3b8e3"/>
      ${[2.5, 5, 7.5].map((d) => svg`<path d=${outline(d)} fill="none" stroke="#5570ad" stroke-width=".9"/>`)}
      <path d=${outline(10)} fill="none" stroke="#2a437c" stroke-width="1.5"/>
      ${OPENINGS.map(([x, y, w, h]) => svg`<rect x=${x} y=${y} width=${w} height=${h} fill="#a3b8e3"/>`)}
      ${HATCH.map(([x, y, w, h]) => svg`<rect x=${x} y=${y} width=${w} height=${h} fill="url(#h)" stroke="#3d5590" stroke-width=".7"/>`)}
      ${DARKL.map((d) => svg`<path d=${d} fill="none" stroke="#2f4780" stroke-width="1"/>`)}
      ${ARCS.map((d) => svg`<path d=${d} fill="none" stroke="#33497e" stroke-width="1"/>`)}
      ${OUT.map((d) => svg`<path d=${d} fill="none" stroke="#222" stroke-width="1"/>`)}
      <circle cx="695" cy="216" r="11" fill="none" stroke="#2f4780" stroke-width="1.2"/>
      <path d="M713 216H835" stroke="#3f9c5a" stroke-width="1.3" stroke-dasharray="12 12"/>
      <path d="M724 200q6 4 4 15q-4 6 0 10q4 6-2 11" fill="none" stroke="#3f9c7a" stroke-width=".8"/>
      <path d="M621 435h20M662 435h21M781 435h19M824 435h19" stroke="#38a4dc" stroke-width="1"/>
      <path d="M641 435h21M800 435h24" stroke="#2f4780" stroke-width="1"/>
      <!-- reference grid -->
      ${HGRID.map((y) => svg`<path d="M223 ${y}H1304" stroke="#c8c6bc" stroke-width="1" stroke-dasharray="108 34 43 34" stroke-dashoffset="84"/>`)}
      ${VGRID.map((x) => svg`<path d="M${x} 193V835" stroke="#c8c8c8" stroke-width="1" stroke-dasharray="108 34 43 34" stroke-dashoffset="59"/>`)}
      <path d="M358 433V835" stroke="#222" stroke-width="1"/>
      <path d="M377 193V835" stroke="#4f74d4" stroke-width="2" stroke-dasharray="108 34 43 34" stroke-dashoffset="59"/>
      <path d="M223 292H249M281 292h4M319 292h44M395 292h4M433 292h44M509 292h4M547 292h45M623 292h4M661 292h45M737 292h4M775 292h45M851 292h4M889 292h44M965 292h4M1003 292h44M1079 292h4M1117 292h44M1193 292h4M1231 292h44" stroke="#222" stroke-width="1"/>
      <path d="M372 248L858 733M1127 193L588 733" stroke="#3060d4" stroke-width="1"/>
      <path d="M358 247H462M358 433H462M462 433V733H1004V433H1162M1162 193V433M358 247V433M462 193V247" fill="none" stroke="#3f66c8" stroke-width="1.5"/>
      <!-- area tag -->
      <rect x="645.5" y="488.5" width="29" height="127" fill="#a3b8e3" stroke="#222" stroke-width="1"/>
      <rect x="654" y="497" width="14" height="114" fill="#fff"/>
      <text transform="translate(665 611) rotate(-90)" font-family="Liberation Sans" font-style="italic" font-size="12.5" fill="#222">Área común del piso</text>
      <rect x="680" y="555" width="50" height="27" fill="#fff"/>
      <text x="680" y="577" font-family="Liberation Sans" font-size="24" fill="#111" text-decoration="underline">Área</text>
      <rect x="680" y="587" width="85" height="24" fill="#fff"/>
      <text x="681" y="606" font-family="Liberation Sans" font-style="italic" font-size="20.5" fill="#111">87.66 m²</text>
      <!-- watermark -->
      <ellipse cx="1088" cy="543" rx="43" ry="18" transform="rotate(-20 1088 543)" fill="none" stroke="#a9bde0" stroke-width="3"/>
      <path d="M1074 546q4-16 18-17q-6 6-10 18q8-10 16-12" fill="none" stroke="#c9a878" stroke-width="1.4"/>
      <text x="1043" y="536" font-family="Liberation Serif" font-weight="700" font-style="italic" font-size="19" letter-spacing="1" fill="#a4aee0">Editorial</text>
      <text x="1043" y="555" font-family="Liberation Serif" font-weight="700" font-style="italic" font-size="17.5" fill="#a4aee0" letter-spacing=".8">Viadas S.A de C.V.</text>
      <!-- nav bar -->
      <rect x="1269.5" y="195.5" width="32" height="114" rx="5" fill="#f4f4f4" fill-opacity=".8" stroke="#c4c4c4" stroke-width="2"/>
      <circle cx="1295" cy="201" r="3.5" fill="#ccc" stroke="#aaa"/>
      <circle cx="1295" cy="302" r="3.5" fill="#ccc" stroke="#aaa"/>
      <path d="M1280 216h7a4 4 0 0 1 4 4v7a6 6 0 0 1-6 6h-4a6 6 0 0 1-6-6v-5a6 6 0 0 1 5-6z" fill="none" stroke="#bbb" stroke-width="1.5"/>
      <circle cx="1282" cy="225" r="5" fill="none" stroke="#bbb" stroke-width="1.2"/>
      <text x="1284" y="237" font-family="Liberation Sans" font-size="9" fill="#6f9fd0">2D</text>
      <path d="M1282 243h6l-3 3z" fill="#777"/>
      <path d="M1273 251h26" stroke="#ccc"/>
      <rect x="1277" y="260" width="10" height="10" fill="#9ccb8c"/>
      <circle cx="1288" cy="270" r="3" fill="none" stroke="#999" stroke-width="1.2"/>
      <path d="M1290 272l3 3" stroke="#999" stroke-width="1.5"/>
      <path d="M1282 285h6l-3 3z" fill="#777"/>
      <!-- pointer -->
      <path d="M407 584v15l3.6-3 2.6 6 2.4-1-2.6-5.8h4.4z" fill="#fff" stroke="#333"/>
    </svg>`;
  }
}

@customElement("app-root")
export class AppRoot extends LitElement {
  static styles = css`
    :host { display: block; width: 1323px; height: 874px; overflow: hidden; font-family: "Open Sans", "Noto Sans", sans-serif; font-size: 11.3px; color: #333; background: #d9d9d9; }
    .ic { display: block; flex: none; }
    .slot { display: flex; align-items: center; justify-content: center; flex: none; width: 0; height: 100%; white-space: nowrap; }
    .title { display: flex; align-items: center; height: 27px; }
    .tsep { display: block; flex: none; width: 1px; height: 19px; background: #b4b4b4; }
    .logoR { flex: none; width: 20px; height: 22px; margin-top: 2px; background: linear-gradient(#2a71d8 0 70%, #123f86 70%); color: #fff; font: 700 13px "Liberation Sans", sans-serif; text-align: center; line-height: 17px; }
    .ttl { width: 394px; flex: none; font-size: 11px; white-space: nowrap; overflow: hidden; margin-left: 5px; color: #333; }
    .blur { flex: none; width: 79px; height: 25px; background: linear-gradient(#8d9088, #bcbfb6 60%, #c9ccc2); filter: blur(1px); }
    .tarrow { font-size: 8px; }
    .tabs { display: flex; align-items: stretch; height: 21px; }
    .arch { width: 58px; margin: 2px 0 0 4px; height: 19px; line-height: 18px; text-align: center; background: #1f72a8; color: #fff; flex: none; }
    .tabtx { color: #444; line-height: 21px; }
    .ctx { width: 104px; margin-top: 2px; height: 19px; line-height: 18px; text-align: center; background: #7fb03c; color: #2f4a12; flex: none; white-space: nowrap; }
    .rib { height: 2px; background: linear-gradient(90deg, transparent 887px, #7fb03c 887px); position: relative; }
    .ribbonw { background: linear-gradient(#d9d9d9 0 2px, #e9eddf 2px); height: 97px; margin-top: -2px; }
    .ctxbar { height: 25px; line-height: 26px; background: #e9eddf; padding-left: 12px; border-top: 1px solid #dfe3d4; box-sizing: border-box; color: #444; }
    .main { display: flex; height: 681px; margin-top: 2px; }
    .gapv { width: 3px; background: #d6d6d6; flex: none; }
    .views { flex: 1; display: flex; flex-direction: column; min-width: 0; background: #f0f0f0; }
    .vtabs { display: flex; align-items: flex-end; justify-content: space-between; height: 21px; background: #d6d6d6; flex: none; }
    .vtab { display: flex; align-items: center; width: 125px; height: 21px; margin-left: 1px; background: #f6f6f6; padding-left: 6px; box-sizing: border-box; gap: 5px; }
    .vtab b { font-weight: 600; flex: 1; color: #333; }
    .vtab .ic:last-child { margin-right: 3px; }
    .vmid { display: flex; flex: none; height: 642px; }
    .vsb { width: 19px; background: #ececec; display: flex; flex-direction: column; align-items: center; position: relative; flex: none; }
    .vsb .ic:last-child { margin-top: auto; margin-bottom: -2px; }
    .vthumb { position: absolute; left: 4px; top: 313px; width: 6px; height: 18px; background: #d4d4d4; }
    .vbar { display: flex; height: 18px; align-items: center; background: #f0f0f0; flex: none; }
    .scale { width: 80px; padding-left: 26px; box-sizing: border-box; flex: none; color: #333; white-space: nowrap; }
    .hsb { display: flex; align-items: center; height: 16px; background: #e6e6e6; width: 723px; flex: none; position: relative; }
    .hthumb { position: absolute; left: 352px; top: 5px; width: 17px; height: 6px; background: #d0d0d0; }
    .hsb .ic:last-child { margin-left: auto; margin-right: 3px; }
    .status { display: flex; align-items: center; height: 21px; padding-top: 5px; box-sizing: border-box; background: #f2f2f2; white-space: nowrap; color: #444; }
    .stext { width: 200px; padding-left: 5px; box-sizing: border-box; flex: none; }
    .muted { color: #999; }
    .one { color: #3a6ea5; font-weight: 700; }
  `;

  render() {
    const withDot = (body: TemplateResult, dx = 9) =>
      html`<svg class="ic" width="20" height="20" viewBox="0 0 20 20">${body}<g transform="translate(${dx} 8)">${I.dot}</g></svg>`;
    const leftTools: StripItem[] = [
      [html`<div class="logoR">R</div>`, 16], ["docs", 39], ["open", 67], ["save", 91], ["sync", 114], [ic("dd", 11), 133],
      ["undo", 151], [ic("dd", 11), 167], ["redo", 185], [ic("dd", 11), 203], ["print", 221], ["sheet", 245], [sep, 260],
      ["pinbar", 276], [sep, 290], ["ruler", 306], [ic("dd", 11), 323], ["aligned", 342], ["tagn", 364], ["atext", 389], [sep, 404],
      ["home", 419], [ic("dd", 11), 436], ["secm", 453], [ic("thin", 22), 478], [sep, 493], ["gdoc", 509], ["switchw", 531], [ic("dd", 11), 547], [ic("custom", 13), 563],
    ];
    const rightTools: StripItem[] = [
      [html`<span class="tarrow">◀</span>`, 975], ["binoc", 992], ["user", 1016], [html`<div class="blur"></div>`, 1067], [ic("dd", 11), 1114],
      ["cart", 1136], [sep, 1153], [ic("help", 20), 1170], [ic("dd", 11), 1187], ["min", 1258], ["max", 1284], ["close", 1310],
    ];
    const tabs: [string, number][] = [
      ["Arquitectura", 106.5], ["Estructura", 184.5], ["Acero", 245.5], ["Prefabricado", 313], ["Sistemas", 388.5],
      ["Insertar", 450.5], ["Anotar", 507], ["Analizar", 565.5], ["Masa y emplazamiento", 665], ["Colaborar", 771],
      ["Vista", 828.5], ["Gestionar", 884.5], ["Complementos", 969.5],
    ];
    const viewBar: StripItem[] = [
      ["detail", 313], ["style", 339], [withDot(I.sun), 364], [withDot(I.shad), 390],
      [html`<svg class="ic" width="20" height="20" viewBox="0 0 20 20">${I.crop}<path d="M12 11l5 5M17 11l-5 5" stroke="#e8303a" stroke-width="1.6"/></svg>`, 415],
      [withDot(I.crop), 441], [ic("hide", 16), 467], [ic("bulb", 16), 492], ["reveal", 518], [withDot(I.analy, 10), 544], [withDot(I.tempd, 10), 569],
    ];
    const stat: StripItem[] = [
      ["work", 297], [ic("chev", 11), 509], ["worksets", 534], [html`<span class="muted">:0</span>`, 546], ["list", 584], ["listg", 609],
      [html`<span class="muted">Modelo base</span>`, 661], [ic("chev", 11), 818],
      ["sellink", 1059], ["selun", 1087], ["selpin", 1111], ["selface", 1137], ["seldrag", 1163], ["ring", 1187], ["funnel", 1212],
      [html`<span class="one">:1</span>`, 1226],
    ];
    return html`
      <div class="title">
        ${strip(leftTools, 0, 567)}
        <div class="ttl">Proyecto Cuantificacion 2025 - Plano de área (Metros Cuadrados de Const...</div>
        ${strip(rightTools, 966, 1323)}
      </div>
      <div class="tabs">
        <div class="arch">Archivo</div>
        ${strip(tabs.map(([t, c]) => [html`<span class="tabtx">${t}</span>`, c] as StripItem), 62, 1022)}
        <div class="ctx">Modificar | Áreas</div>
        ${strip([[ic("panelbtn", 17), 1155], [ic("dd", 11), 1169]], 1126, 1180)}
      </div>
      <div class="rib"></div>
      <div class="ribbonw"><ribbon-bar></ribbon-bar></div>
      <div class="ctxbar">Modificar | Áreas</div>
      <div class="main">
        <side-panel></side-panel>
        <div class="gapv"></div>
        <div class="views">
          <div class="vtabs">
            <div class="vtab">${ic("tabv", 16, 16)}<b>Nivel 1</b>${ic("close", 13)}</div>
            ${ic("custom", 13)}
          </div>
          <div class="vmid">
            <plan-canvas></plan-canvas>
            <div class="vsb">${ic("up", 18)}<i class="vthumb"></i>${ic("down", 18)}</div>
          </div>
          <div class="vbar">
            <div class="scale">1 : 100</div>
            ${strip(viewBar, 301, 582)}
            <div class="hsb">${ic("lt", 14)}<i class="hthumb"></i>${ic("rt", 14)}</div>
            ${ic("grip", 14)}
          </div>
        </div>
      </div>
      <div class="status">
        <div class="stext">Rejillas : Rejilla : 1</div>
        ${strip(stat, 200, 1240)}
      </div>
    `;
  }
}
